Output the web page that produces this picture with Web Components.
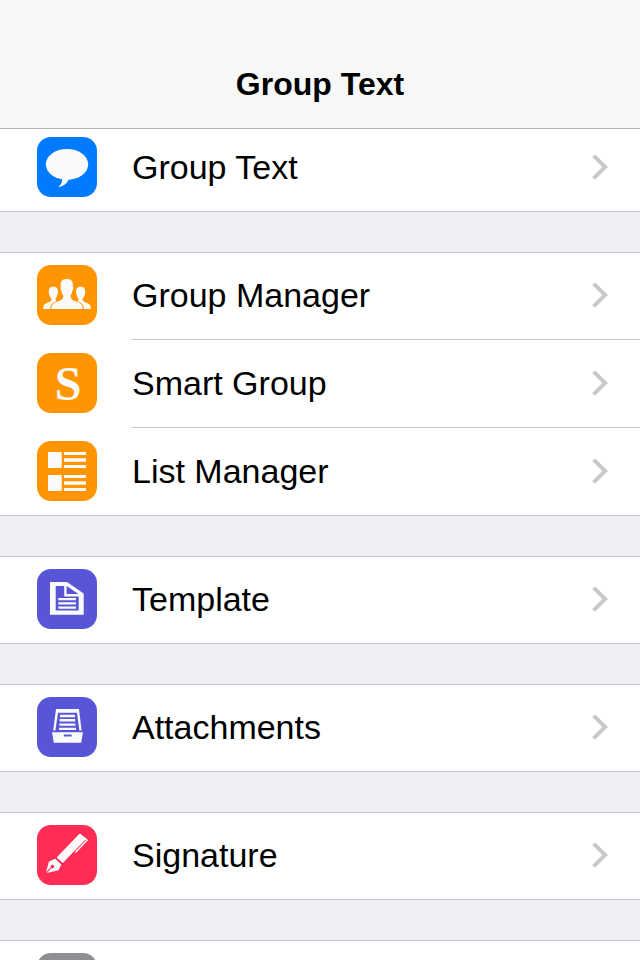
<!DOCTYPE html>
<html lang="en">
<head>
  <meta charset="utf-8">
  <meta name="viewport" content="width=device-width, initial-scale=1">
  <title>Group Text</title>
  <style>
    body {
      margin: 0;
      height: 100vh;
      overflow: hidden;
      background: #efeff4;
      color: #000;
      font-family: "Liberation Sans", Arial, sans-serif;
    }
  </style>
</head>
<body>
  <nav-bar>Group Text</nav-bar>
  <menu-list>
    <menu-section>
      <menu-row icon="bubble" color="#007aff" href="#text">Group Text</menu-row>
    </menu-section>
    <menu-section>
      <menu-row icon="people" color="#ff9500" href="#groups">Group Manager</menu-row>
      <menu-row icon="smart" color="#ff9500" href="#smart">Smart Group</menu-row>
      <menu-row icon="list" color="#ff9500" href="#lists">List Manager</menu-row>
    </menu-section>
    <menu-section>
      <menu-row icon="page" color="#5856d6" href="#template">Template</menu-row>
    </menu-section>
    <menu-section>
      <menu-row icon="tray" color="#5856d6" href="#attachments">Attachments</menu-row>
    </menu-section>
    <menu-section>
      <menu-row icon="pen" color="#ff2d55" href="#signature">Signature</menu-row>
    </menu-section>
    <menu-section>
      <menu-row icon="blank" color="#8e8e93" href="#more"></menu-row>
    </menu-section>
  </menu-list>

  <script>
    // All icons are drawn on a 60x60 canvas
    const ICONS = {
      bubble: `
        <ellipse cx="30" cy="27.3" rx="21.2" ry="15.4"/>
        <path d="M25.2 41.5C25.4 45 24 48 21.4 49.9C27 49.6 30.5 46 32 41.5Z"/>`,
      people: `
        <path d="M6.2 44C6.2 40.5 7.2 39 10 38C13 36.9 14.6 36.4 14.4 33.6C12.8 32 12 29.6 11.8 27.2C11.4 23.6 13.4 21.8 16.3 21.8C19.3 21.8 21.2 23.6 20.9 27C20.7 29.5 20 31.8 18.6 33.6C18.5 35 18.8 35.6 19.6 36.2C15 38 13.4 39.5 13.2 44Z"/>
        <path d="M53.8 44C53.8 40.5 52.8 39 50 38C47 36.9 45.4 36.4 45.6 33.6C47.2 32 48 29.6 48.2 27.2C48.6 23.6 46.6 21.8 43.7 21.8C40.7 21.8 38.8 23.6 39.1 27C39.3 29.5 40 31.8 41.4 33.6C41.5 35 41.2 35.6 40.4 36.2C45 38 46.6 39.5 46.8 44Z"/>
        <path d="M14.4 44C14.6 39.8 15.6 38.3 19.6 37C23.8 35.6 26.6 34.6 26.3 30.6C25 29 24.4 27 24.3 25.2C23.2 24.4 23.3 22.6 23.9 21.8C23 17 24.8 13.8 29.6 14C34.4 13.6 36.6 17 35.8 21.8C36.6 22.8 36.4 24.6 35.4 25.4C35.2 27.4 34.6 29 33.6 30.6C33.4 34.6 36.2 35.6 40.4 37C44.4 38.3 45.4 39.8 45.6 44Z"/>`,
      smart: `
        <text x="31" y="47" text-anchor="middle" font-family="Liberation Serif, serif" font-size="48" font-weight="bold">S</text>`,
      list: `
        <path d="M11 11H24.7V27H11ZM27 11H49V14H27ZM27 17.3H49V20.7H27ZM27 24H49V27H27Z"/>
        <path d="M11 34H24.7V50H11ZM27 34H49V37H27ZM27 40.3H49V43.7H27ZM27 47H49V50H27Z"/>`,
      page: `
        <path fill-rule="evenodd" d="M13 13H30L46.7 24.5V45.8H13ZM18.7 17V41.5H41.7V27.5H27.2V17ZM29.6 17V25H41.5Z"/>
        <path d="M21.3 29H39V31.2H21.3ZM21.3 33.3H39V35.5H21.3ZM21.3 37.6H39V39.8H21.3Z"/>`,
      tray: `
        <path d="M19 12H42L44.6 33.6H42.4L40 15.8H21L18.4 33.6H16.2Z"/>
        <path d="M23 17.8H38V20.2H23ZM22.6 22.1H38.2V24.5H22.6ZM22.4 26.4H38.4V28.8H22.4ZM22 30.7H39V33H22Z"/>
        <path fill-rule="evenodd" d="M15 35.3H46L44.2 45.8H16.8ZM26.8 37.6V39.6H34.6V37.6Z"/>`,
      pen: `
        <path d="M42 9.2Q43 8.3 44 9.2L48.2 12.8Q49.2 13.7 48.3 14.8L25.7 38L19.6 32.5Z"/>
        <path fill="none" stroke="#fafafa" stroke-width="1.5" d="M47.8 13L50 15.2L38.4 27.6"/>
        <path fill-rule="evenodd" d="M18.2 33.8L24.3 39.6L21.6 45.2L9.8 48L14.6 43.1A1.8 1.8 0 1 0 13.8 42.3L8.9 47.2L12 36.6Z"/>`,
      blank: ``
    };

    class NavBar extends HTMLElement {
      constructor() {
        super();
        this.attachShadow({ mode: 'open' });
        this.shadowRoot.innerHTML = `
          <style>
            :host {
              display: block;
              position: relative;
              z-index: 1;
            }

            header {
              padding-top: 40px; /* status bar */
              background: #f7f7f7;
              border-bottom: 1px solid #b2b2b2;
            }

            h1 {
              margin: 0;
              font-size: 32px;
              line-height: 88px;
              font-weight: bold;
              text-align: center;
            }
          </style>
          <header><h1><slot></slot></h1></header>
        `;
      }
    }

    class MenuList extends HTMLElement {
      constructor() {
        super();
        this.attachShadow({ mode: 'open' });
        this.shadowRoot.innerHTML = `
          <style>
            :host {
              display: block;
              margin-top: -5px; /* scrolled slightly under the bar */
            }

            nav {
              display: flex;
              flex-direction: column;
              gap: 40px;
            }
          </style>
          <nav aria-label="Menu"><slot></slot></nav>
        `;
      }
    }

    class MenuSection extends HTMLElement {
      constructor() {
        super();
        this.attachShadow({ mode: 'open' });
        this.shadowRoot.innerHTML = `
          <style>
            :host {
              display: block;
              background: #fff;
              box-shadow: inset 0 1px #c8c7cc, inset 0 -1px #c8c7cc;
            }
          </style>
          <slot></slot>
        `;
      }
    }

    class MenuRow extends HTMLElement {
      constructor() {
        super();
        this.attachShadow({ mode: 'open' });
      }

      connectedCallback() {
        this.shadowRoot.innerHTML = `
          <style>
            :host {
              display: block;
            }

            a {
              display: flex;
              gap: 35px;
              padding-left: 37px;
              color: inherit;
              text-decoration: none;
            }

            .icon {
              flex: none;
              width: 60px;
              height: 60px;
              margin-top: 13px;
              border-radius: 14px;
              fill: #fafafa;
            }

            .body {
              flex: 1;
              display: flex;
              align-items: center;
              justify-content: space-between;
              height: 87px;
              padding-right: 32px;
              border-bottom: 1px solid #c8c7cc;
              font-size: 34px;
            }

            .arrow {
              flex: none;
              width: 16px;
              height: 28px;
              fill: none;
              stroke: #c7c7cc;
              stroke-width: 4;
            }
          </style>
          <a href="${this.getAttribute('href')}">
            <svg class="icon" viewBox="0 0 60 60" aria-hidden="true" style="background: ${this.getAttribute('color')}">
              ${ICONS[this.getAttribute('icon')]}
            </svg>
            <span class="body">
              <slot></slot>
              <svg class="arrow" viewBox="0 0 16 28" aria-hidden="true"><path d="M1.6 1.6L13.2 13L1.6 24.4"/></svg>
            </span>
          </a>
        `;
      }
    }

    customElements.define('nav-bar', NavBar);
    customElements.define('menu-list', MenuList);
    customElements.define('menu-section', MenuSection);
    customElements.define('menu-row', MenuRow);
  </script>
</body>
</html>
